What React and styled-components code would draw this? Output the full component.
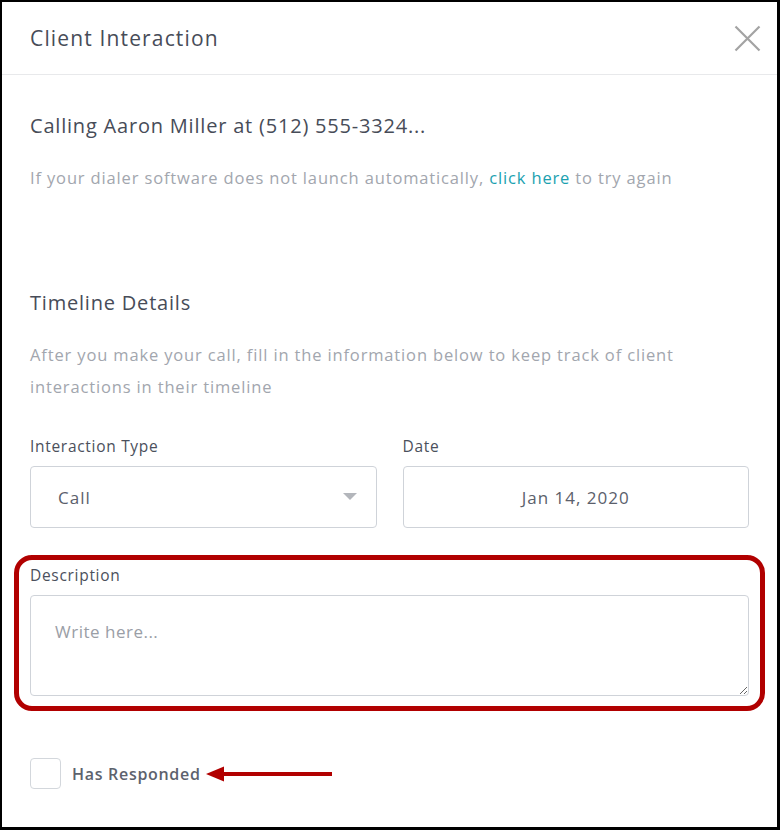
import React from "react";
import styled, { createGlobalStyle } from "styled-components";

const Global = createGlobalStyle`
  html, body { margin: 0; padding: 0; background: #fff; }
  body { font-family: "Open Sans", "Noto Sans", sans-serif; }
  * { box-sizing: border-box; }
`;

const Frame = styled.div`
  width: 780px;
  height: 830px;
  border-style: solid;
  border-color: #000;
  border-width: 2px 3px 3px 2px;
  background: #fff;
  display: flex;
  flex-direction: column;
  overflow: hidden;
`;

const Header = styled.header`
  height: 73px;
  flex: none;
  display: flex;
  align-items: center;
  justify-content: space-between;
  padding: 0 14px 0 28px;
  border-bottom: 1px solid #e8e9eb;
`;

const Title = styled.h1`
  margin: 0;
  font-size: 21px;
  font-weight: 400;
  color: #474c58;
  letter-spacing: 1.15px;
`;

const CloseButton = styled.button`
  border: 0;
  background: none;
  padding: 0;
  width: 32px;
  height: 32px;
  display: flex;
  align-items: center;
  justify-content: center;
  cursor: pointer;
`;

const Body = styled.main`
  padding: 39px 28px 0 28px;
  display: flex;
  flex-direction: column;
`;

const Heading = styled.h2`
  margin: ${(p) => p.$top || 0}px 0 0;
  font-size: 20px;
  line-height: 24px;
  font-weight: 400;
  color: #474c58;
  letter-spacing: 0.8px;
`;

const Muted = styled.p`
  margin: ${(p) => p.$top || 0}px 0 0;
  font-size: 16.5px;
  line-height: ${(p) => p.$lh || 24}px;
  color: #a2a6ae;
  letter-spacing: 0.85px;
`;

const Link = styled.a`
  color: #1ba1b0;
  text-decoration: none;
  cursor: pointer;
`;

const Row = styled.div`
  margin-top: 33px;
  display: grid;
  grid-template-columns: 1fr 1fr;
  column-gap: 26px;
`;

const Field = styled.div`
  display: flex;
  flex-direction: column;
  gap: 10px;
  position: relative;
  margin-top: ${(p) => p.$top || 0}px;
`;

const Label = styled.label`
  font-size: 15.5px;
  line-height: 20px;
  color: #4b505c;
  letter-spacing: 0.7px;
`;

const Box = styled.div`
  height: 62px;
  border: 1px solid #cfd3d9;
  border-radius: 4px;
  display: flex;
  align-items: center;
  justify-content: ${(p) => (p.$center ? "center" : "space-between")};
  padding: ${(p) => (p.$center ? "0" : "0 19px 0 27px")};
  font-size: 17px;
  letter-spacing: 1px;
  color: #5b606b;
  background: #fff;
`;

const TextArea = styled.textarea`
  height: 101px;
  width: 100%;
  border: 1px solid #cfd3d9;
  border-radius: 4px;
  padding: 24px 24px;
  font-family: "Open Sans", "Noto Sans", sans-serif;
  font-size: 17px;
  letter-spacing: 0.5px;
  color: #5b606b;
  resize: vertical;
  outline: none;
  display: block;
  &::placeholder { color: #9a9ea6; }
`;

const Highlight = styled.div`
  position: absolute;
  left: -16px;
  right: -16px;
  top: -10px;
  bottom: -15px;
  border: 5px solid #b10000;
  border-radius: 18px;
  pointer-events: none;
`;

const CheckRow = styled.div`
  margin-top: 62px;
  display: flex;
  align-items: center;
`;

const CheckBox = styled.span`
  width: 31px;
  height: 31px;
  border: 1px solid #d3d7dc;
  border-radius: 4px;
  flex: none;
  margin-right: 11px;
`;

const CheckLabel = styled.span`
  font-size: 16px;
  font-weight: 600;
  color: #5d626d;
  letter-spacing: 0.7px;
`;

const Arrow = styled.svg`
  margin-left: 5px;
  flex: none;
`;

export default function App() {
  return (
    <>
      <Global />
      <Frame>
        <Header>
          <Title>Client Interaction</Title>
          <CloseButton aria-label="Close">
            <svg width="27" height="27" viewBox="0 0 27 27">
              <path d="M1.5 1.5 L25.5 25.5 M25.5 1.5 L1.5 25.5" stroke="#a3a3a3" strokeWidth="2.2" fill="none" />
            </svg>
          </CloseButton>
        </Header>
        <Body>
          <Heading>Calling Aaron Miller at (512) 555-3324...</Heading>
          <Muted $top={28}>
            If your dialer software does not launch automatically, <Link>click here</Link> to try again
          </Muted>
          <Heading $top={101}>Timeline Details</Heading>
          <Muted $top={24} $lh={32}>
            After you make your call, fill in the information below to keep track of client
            interactions in their timeline
          </Muted>
          <Row>
            <Field>
              <Label>Interaction Type</Label>
              <Box>
                <span>Call</span>
                <svg width="14" height="8" viewBox="0 0 14 8">
                  <path d="M0 0 H14 L7 7 Z" fill="#b3b6bb" />
                </svg>
              </Box>
            </Field>
            <Field>
              <Label>Date</Label>
              <Box $center>Jan 14, 2020</Box>
            </Field>
          </Row>
          <Field $top={37}>
            <Label>Description</Label>
            <TextArea placeholder="Write here..." />
            <Highlight />
          </Field>
          <CheckRow>
            <CheckBox />
            <CheckLabel>Has Responded</CheckLabel>
            <Arrow width="126" height="18" viewBox="0 0 126 18">
              <path d="M0 9 L18 1.5 L18 16.5 Z" fill="#b10000" />
              <rect x="16" y="7" width="110" height="4" fill="#b10000" />
            </Arrow>
          </CheckRow>
        </Body>
      </Frame>
    </>
  );
}
